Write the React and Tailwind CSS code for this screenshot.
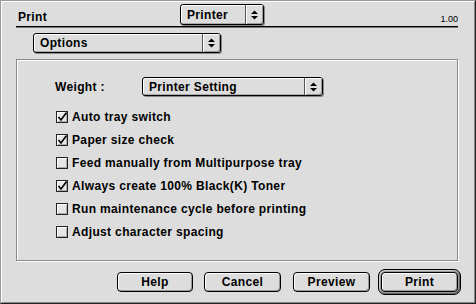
import React from "react";

const Arrows = () => (
  <svg width="7" height="10" viewBox="0 0 7 10">
    <polygon points="0,4 3.5,0.5 7,4" fill="#000" />
    <polygon points="0,6 7,6 3.5,9.5" fill="#000" />
  </svg>
);

const Popup = ({ label, className }) => (
  <div
    className={`flex border border-black rounded-[3px] bg-[#dddddd] shadow-[inset_1px_1px_0_#fff,inset_-1px_-1px_0_#aaa,1px_1px_0_#888] ${className}`}
  >
    <div className="flex-1 flex items-center pl-[6px] leading-none">{label}</div>
    <div className="w-[18px] flex items-center justify-center border-l border-[#555] shadow-[inset_1px_1px_0_#fff,inset_-1px_-1px_0_#999] rounded-r-[2px]">
      <Arrows />
    </div>
  </div>
);

const Checkbox = ({ checked, label }) => (
  <div className="h-[23px] flex items-center">
    <div className="ml-px mr-[4px] w-[12px] h-[12px] border border-[#222] bg-[#e6e6e6] shadow-[inset_1px_1px_0_#fff,inset_-1px_-1px_0_#aaa] flex items-center justify-center">
      {checked && (
        <svg width="10" height="10" viewBox="0 0 10 10">
          <path d="M1.5 5 L4 8 L9.5 0.5" stroke="#000" strokeWidth="1.6" fill="none" />
        </svg>
      )}
    </div>
    <span className="leading-none">{label}</span>
  </div>
);

const Button = ({ label, className = "" }) => (
  <div
    className={`h-[20px] flex items-center justify-center border border-black rounded-[4px] bg-[#dddddd] shadow-[inset_1px_1px_0_#fff,inset_-1px_-1px_0_#999] leading-none ${className}`}
  >
    {label}
  </div>
);

const options = [
  { label: "Auto tray switch", checked: true },
  { label: "Paper size check", checked: true },
  { label: "Feed manually from Multipurpose tray", checked: false },
  { label: "Always create 100% Black(K) Toner", checked: true },
  { label: "Run maintenance cycle before printing", checked: false },
  { label: "Adjust character spacing", checked: false },
];

export default function App() {
  return (
    <div className="w-[476px] h-[304px] bg-[#dddddd] border border-t-[#999] border-l-[#999] border-r-[#222] border-b-[#222] font-['Liberation_Sans',Arial,sans-serif] font-bold text-[12px] tracking-[0.35px] text-black select-none">
      <div className="h-full border border-t-white border-l-white border-r-[#888] border-b-[#888]">
        {/* title row */}
        <div className="ml-[14px] w-[442px] h-[25px] flex items-end border-b border-black shadow-[0_1px_0_#777]">
          <div className="w-[164px] pl-[2px] mb-[3px] leading-none">Print</div>
          <Popup label="Printer" className="w-[84px] h-[21px] mb-[1px]" />
          <div className="flex-1 text-right mb-[2px] leading-none font-normal text-[9px] tracking-normal">1.00</div>
        </div>

        <Popup label="Options" className="ml-[31px] mt-[6px] w-[188px] h-[20px]" />

        {/* group box */}
        <div className="ml-[14px] mt-[6px] w-[442px] h-[202px] border border-[#888] shadow-[inset_1px_1px_0_#fff,1px_1px_0_#fff] pl-[38px] pt-[17px]">
          <div className="flex items-center h-[19px]">
            <div className="w-[87px] leading-none">Weight :</div>
            <Popup label="Printer Setting" className="w-[181px] h-[19px]" />
          </div>
          <div className="mt-[9px]">
            {options.map((o) => (
              <Checkbox key={o.label} label={o.label} checked={o.checked} />
            ))}
          </div>
        </div>

        {/* buttons */}
        <div className="mt-[8px] pr-[13px] flex justify-end items-center h-[26px]">
          <Button label="Help" className="w-[76px]" />
          <Button label="Cancel" className="w-[77px] ml-[11px]" />
          <Button label="Preview" className="w-[77px] ml-[12px]" />
          <div className="ml-[8px] w-[83px] h-[26px] p-[2px] border border-black rounded-[7px] bg-[#999] shadow-[inset_1px_1px_0_#ccc,inset_-1px_-1px_0_#666]">
            <Button label="Print" className="w-full" />
          </div>
        </div>
      </div>
    </div>
  );
}
